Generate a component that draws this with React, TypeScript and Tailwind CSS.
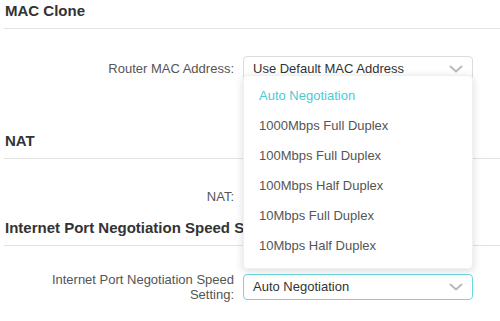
import React from 'react';

const options = [
  'Auto Negotiation',
  '1000Mbps Full Duplex',
  '100Mbps Full Duplex',
  '100Mbps Half Duplex',
  '10Mbps Full Duplex',
  '10Mbps Half Duplex',
];

const Chevron: React.FC = () => (
  <svg width="14" height="8" viewBox="0 0 14 8" className="shrink-0" aria-hidden="true">
    <path d="M1.5 1.5 L7 6.5 L12.5 1.5" fill="none" stroke="#bbbbbb" strokeWidth="2" strokeLinecap="round" strokeLinejoin="round" />
  </svg>
);

const Heading: React.FC<{ children: React.ReactNode; className?: string }> = ({ children, className }) => (
  <h2 className={`text-[15px] font-bold leading-[22px] pb-[6px] pl-[1px] text-[#333] border-b border-[#e3e3e3] whitespace-nowrap overflow-hidden ${className ?? ''}`}>
    {children}
  </h2>
);

const Select: React.FC<{ value: string; focused?: boolean }> = ({ value, focused }) => (
  <div
    className={`w-[230px] h-[26px] flex items-center justify-between pl-[9px] pr-[9px] rounded-[4px] border bg-white text-[13px] text-[#333] ${
      focused ? 'border-[#6fd8e0]' : 'border-[#dcdcdc]'
    }`}
  >
    <span>{value}</span>
    <Chevron />
  </div>
);

export default function App() {
  return (
    <div className="w-[500px] h-[321px] overflow-hidden bg-white pl-[4px] font-['Liberation_Sans',Arial,sans-serif]">
      <Heading>MAC Clone</Heading>

      <div className="relative flex items-center gap-[9px] mt-[27px]">
        <label className="w-[230px] pl-[40px] text-right text-[13px] text-[#555]">Router MAC Address:</label>
        <div className="relative">
          <Select value="Use Default MAC Address" />
          <ul className="absolute left-0 top-[19px] z-10 w-[230px] bg-white rounded-[4px] pt-[5px] pb-[7px] shadow-[0_2px_8px_rgba(0,0,0,0.15)] border border-[#f0f0f0]">
            {options.map((opt, i) => (
              <li
                key={opt}
                className={`h-[30px] flex items-center pl-[15px] text-[13px] ${i === 0 ? 'text-[#4acbd6]' : 'text-[#555]'}`}
              >
                {opt}
              </li>
            ))}
          </ul>
        </div>
      </div>

      <Heading className="mt-[48px]">NAT</Heading>

      <div className="flex items-center gap-[9px] mt-[25px]">
        <label className="w-[230px] pl-[40px] text-right text-[13px] text-[#555]">NAT:</label>
        <div className="w-[230px] h-[26px]" />
      </div>

      <Heading className="mt-[7px]">Internet Port Negotiation Speed Setting</Heading>

      <div className="flex items-center gap-[9px] mt-[26px]">
        <label className="w-[230px] pl-[40px] text-right text-[13px] leading-[15px] text-[#555]">
          Internet Port Negotiation Speed Setting:
        </label>
        <Select value="Auto Negotiation" focused />
      </div>
    </div>
  );
}
